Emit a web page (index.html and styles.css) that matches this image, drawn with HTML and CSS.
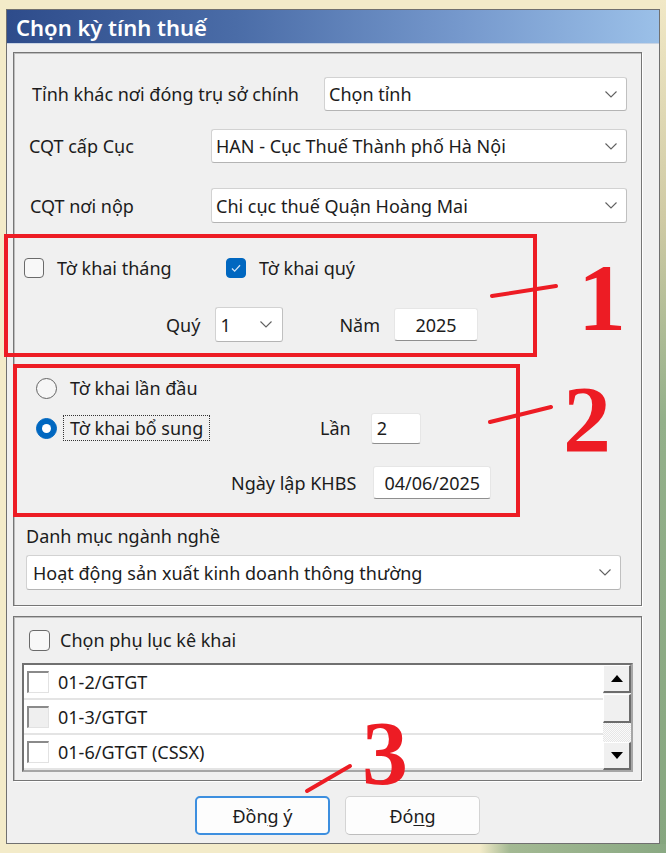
FILE: index.html
```html
<!DOCTYPE html>
<html lang="vi">
<head>
<meta charset="utf-8">
<title>Chọn kỳ tính thuế</title>
<link rel="stylesheet" href="styles.css">
</head>
<body>
<div class="window">
  <div class="titlebar">Chọn kỳ tính thuế</div>
  <div class="client">
    <div class="group group-main">
      <div class="row row1">
        <span class="lbl lbl-tinh">Tỉnh khác nơi đóng trụ sở chính</span>
        <div class="select grow"><span class="val">Chọn tỉnh</span><svg class="chev" viewBox="0 0 12 7"><polyline points="0.5,0.5 6,6 11.5,0.5"/></svg></div>
      </div>
      <div class="row row2">
        <span class="lbl lbl-cqt">CQT cấp Cục</span>
        <div class="select grow"><span class="val">HAN - Cục Thuế Thành phố Hà Nội</span><svg class="chev" viewBox="0 0 12 7"><polyline points="0.5,0.5 6,6 11.5,0.5"/></svg></div>
      </div>
      <div class="row row3">
        <span class="lbl lbl-cqt2">CQT nơi nộp</span>
        <div class="select grow"><span class="val">Chi cục thuế Quận Hoàng Mai</span><svg class="chev" viewBox="0 0 12 7"><polyline points="0.5,0.5 6,6 11.5,0.5"/></svg></div>
      </div>
      <div class="row row-check">
        <label class="opt opt-thang"><span class="cb"></span><span>Tờ khai tháng</span></label>
        <label class="opt"><span class="cb checked"><svg viewBox="0 0 20 20"><polyline points="5.5,10.5 8.5,13.5 14.5,7"/></svg></span><span>Tờ khai quý</span></label>
      </div>
      <div class="row row-quy">
        <span class="lbl-quy">Quý</span>
        <div class="select sel-quy"><span class="val">1</span><svg class="chev" viewBox="0 0 12 7"><polyline points="0.5,0.5 6,6 11.5,0.5"/></svg></div>
        <span class="lbl-nam">Năm</span>
        <div class="tb tb-nam">2025</div>
      </div>
      <div class="row row-radio1">
        <label class="opt"><span class="rb"></span><span>Tờ khai lần đầu</span></label>
      </div>
      <div class="row row-radio2">
        <label class="opt opt-bs"><span class="rb checked"></span><span class="focus">Tờ khai bổ sung</span></label>
        <span class="lbl-lan">Lần</span>
        <div class="tb tb-lan">2</div>
      </div>
      <div class="row row-ngay">
        <span class="lbl-ngay">Ngày lập KHBS</span>
        <div class="tb tb-ngay">04/06/2025</div>
      </div>
      <div class="lbl-danh">Danh mục ngành nghề</div>
      <div class="select sel-danh"><span class="val">Hoạt động sản xuất kinh doanh thông thường</span><svg class="chev" viewBox="0 0 12 7"><polyline points="0.5,0.5 6,6 11.5,0.5"/></svg></div>
    </div>

    <div class="group group-pl">
      <div class="row row-pl">
        <label class="opt"><span class="cb"></span><span>Chọn phụ lục kê khai</span></label>
      </div>
      <div class="list">
        <div class="items">
          <div class="item"><span class="ccb"></span><span>01-2/GTGT</span></div>
          <div class="item"><span class="ccb grey"></span><span>01-3/GTGT</span></div>
          <div class="item"><span class="ccb"></span><span>01-6/GTGT (CSSX)</span></div>
        </div>
        <div class="scrollbar">
          <div class="sbtn"><svg viewBox="0 0 12 7"><polygon points="0,7 6,0 12,7"/></svg></div>
          <div class="thumb"></div>
          <div class="track"></div>
          <div class="sbtn"><svg viewBox="0 0 12 7"><polygon points="0,0 12,0 6,7"/></svg></div>
        </div>
      </div>
    </div>

    <div class="buttons">
      <button class="btn default">Đồn<u>g</u> ý</button>
      <button class="btn">Đó<u>n</u>g</button>
    </div>
  </div>
</div>

<div class="mark mark-box1"></div>
<div class="mark mark-box2"></div>
<svg class="mark-lines" viewBox="0 0 666 853" width="666" height="853">
  <line x1="492" y1="296" x2="556" y2="286"/>
  <line x1="490" y1="422" x2="551" y2="407"/>
  <line x1="307" y1="791" x2="350" y2="766"/>
</svg>
<span class="num num1">1</span>
<span class="num num2">2</span>
<span class="num num3">3</span>
</body>
</html>
```
FILE: styles.css
```css
* { box-sizing: border-box; }
html, body { margin: 0; padding: 0; }
body {
  width: 666px;
  height: 853px;
  overflow: hidden;
  position: relative;
  font-family: "Noto Sans", "Open Sans", "DejaVu Sans", sans-serif;
  font-size: 18px;
  color: #1c1c1c;
  background:
    linear-gradient(to right, #f3ebc9 0, #f3ebc9 660px, transparent 660px) 0 0 / 666px 844px no-repeat,
    linear-gradient(to right, #f3ebc9 0, #f3ebc9 480px, #a3b993 510px, #8aa983 100%) 0 844px / 666px 9px no-repeat,
    linear-gradient(to bottom, #f1e8c6 0, #cfcaa4 220px, #93b08a 420px, #86a67f 100%);
}
.window {
  margin: 9px 0 0 6px;
  width: 654px;
  height: 835px;
  border: 1px solid #707070;
  background: #f0f0f0;
  display: flex;
  flex-direction: column;
}
.titlebar {
  height: 34px;
  padding-left: 9px;
  display: flex;
  align-items: center;
  color: #fff;
  font-family: "Noto Sans", sans-serif;
  font-weight: 600;
  font-size: 22px;
  background: linear-gradient(to right, #2e4c8b 0%, #4a6ca7 35%, #7699cd 70%, #9bc0e8 100%);
  border-bottom: 1px solid #c9d4e4;
}
.client {
  flex: 1;
  padding: 8px 17px 0 6px;
  display: flex;
  flex-direction: column;
}
.group {
  border: 1px solid #767676;
  box-shadow: inset 1px 1px 0 #bdbdbd, 1px 1px 0 #fff;
}
.group-main { padding: 0 0 15px 0; }
.row {
  display: flex;
  align-items: center;
}
.grow { flex: 1; }

.row1 { margin-top: 24px; height: 34px; padding: 0 14px 0 18px; }
.row2 { margin-top: 18px; height: 34px; padding: 0 14px 0 15px; }
.row3 { margin-top: 25px; height: 35px; padding: 0 14px 0 16px; }
.lbl-tinh { width: 292px; white-space: nowrap; }
.lbl-cqt { width: 182px; }
.lbl-cqt2 { width: 181px; }
.row1 .select, .row2 .select, .row3 .select { height: 100%; }

.select {
  display: flex;
  align-items: center;
  background: #fff;
  border: 1px solid #d2d2d2;
  border-bottom-color: #b4b4b4;
  border-right-color: #c0c0c0;
  border-radius: 3px;
  padding: 0 9px 0 4px;
}
.select .val { flex: 1; white-space: nowrap; }
.chev { width: 12px; height: 7px; flex: none; }
.chev polyline { fill: none; stroke: #606060; stroke-width: 1.1; }

.row-check { margin-top: 33px; height: 24px; padding-left: 10px; }
.opt { display: flex; align-items: center; gap: 13px; white-space: nowrap; }
.opt-thang { width: 202px; }
.cb {
  width: 20px; height: 20px;
  border: 1px solid #6a6a6a;
  border-radius: 4px;
  background: #f8f8f8;
  flex: none;
  display: block;
}
.cb.checked { background: #0067c0; border-color: #0067c0; }
.cb.checked svg { width: 18px; height: 18px; display: block; }
.cb.checked polyline { fill: none; stroke: #cfe4f7; stroke-width: 1.4; }

.row-quy { margin-top: 27px; height: 35px; padding-left: 152px; }
.lbl-quy { margin-right: 15px; }
.sel-quy { width: 68px; height: 35px; padding-left: 4px; padding-right: 10px; }
.lbl-nam { margin-left: 56px; margin-right: 14px; }
.tb {
  display: flex;
  align-items: center;
  background: #fff;
  border: 1px solid #e6e6e6;
  border-bottom: 1px solid #8f8f8f;
  border-radius: 3px;
  padding: 0 5px;
}
.tb-nam { width: 84px; height: 33px; justify-content: center; }

.row-radio1 { margin-top: 34px; height: 24px; padding-left: 22px; }
.rb {
  width: 21px; height: 21px;
  border-radius: 50%;
  border: 1px solid #646464;
  background: #f6f6f6;
  flex: none;
  display: flex;
  align-items: center;
  justify-content: center;
}
.rb.checked { background: #0067c0; border-color: #0067c0; }
.rb.checked::after {
  content: "";
  width: 9px; height: 9px;
  border-radius: 50%;
  background: #fff;
}
.row-radio2 { margin-top: 12px; height: 32px; padding-left: 22px; }
.opt-bs { gap: 6px; width: 284px; }
.focus { border: 1px dotted #333; padding: 0 6px 1px 6px; height: 26px; display: flex; align-items: center; }
.lbl-lan { margin-right: 20px; }
.tb-lan { width: 50px; height: 31px; }

.row-ngay { margin-top: 22px; height: 33px; padding-left: 217px; }
.lbl-ngay { margin-right: 17px; white-space: nowrap; }
.tb-ngay { width: 118px; height: 33px; justify-content: center; padding: 0 2px; }

.lbl-danh { margin: 26px 0 0 12px; height: 22px; line-height: 22px; }
.sel-danh { margin: 8px 20px 0 12px; height: 35px; padding-left: 6px; }

.group-pl { margin-top: 10px; padding: 0 8px 8px 8px; }
.row-pl { margin-top: 12px; height: 22px; padding-left: 7px; }
.row-pl .opt { gap: 10px; }
.row-pl .cb { width: 21px; height: 21px; }

.list {
  margin-top: 12px;
  height: 109px;
  display: flex;
  background: #fff;
  border: 2px solid;
  border-color: #707070 #a6a6a6 #a6a6a6 #707070;
}
.items { flex: 1; }
.item {
  height: 35px;
  display: flex;
  align-items: center;
  gap: 9px;
  padding-left: 3px;
  border-bottom: 2px solid #e4e4e4;
}
.ccb {
  width: 22px; height: 22px;
  background: #fff;
  border-top: 2px solid #8a8a8a;
  border-left: 2px solid #8a8a8a;
  border-right: 1px solid #e2e2e2;
  border-bottom: 1px solid #e2e2e2;
  flex: none;
}
.ccb.grey { background: #efefef; }
.scrollbar {
  width: 28px;
  display: flex;
  flex-direction: column;
  background: #f0f0f0;
}
.sbtn, .thumb {
  background: #f0f0f0;
  border-top: 1px solid #fff;
  border-left: 1px solid #fff;
  border-right: 2px solid #6c6c6c;
  border-bottom: 2px solid #6c6c6c;
}
.sbtn {
  height: 28px;
  display: flex;
  align-items: center;
  justify-content: center;
}
.sbtn svg { width: 12px; height: 7px; }
.sbtn polygon { fill: #000; }
.thumb { height: 29px; margin-top: 1px; }
.track {
  flex: 1;
  background: repeating-conic-gradient(#e6e6e6 0 25%, #fafafa 0 50%) 0 0 / 2px 2px;
}

.buttons {
  margin-top: 15px;
  display: flex;
  gap: 15px;
  padding-left: 182px;
}
.btn {
  width: 135px;
  height: 39px;
  font-family: inherit;
  font-size: 18px;
  color: #1c1c1c;
  background: #fdfdfd;
  border: 1px solid #d4d4d4;
  border-bottom-color: #bdbdbd;
  border-radius: 5px;
  padding: 0;
}
.btn.default { border: 2px solid #3d8fdf; }
.btn u { text-underline-offset: 2px; }

/* red annotation overlay */
.mark {
  position: absolute;
  border: 4px solid #ed1c24;
}
.mark-box1 { left: 4px; top: 234px; width: 533px; height: 123px; }
.mark-box2 { left: 13px; top: 364px; width: 507px; height: 153px; }
.mark-lines {
  position: absolute;
  left: 0; top: 0;
  pointer-events: none;
}
.mark-lines line { stroke: #ed1c24; stroke-width: 4; stroke-linecap: round; }
.num {
  position: absolute;
  font-family: "Liberation Serif", "Times New Roman", serif;
  font-weight: bold;
  font-size: 96px;
  line-height: 70px;
  color: #ed1c24;
}
.num1 { left: 578px; top: 263px; }
.num2 { left: 563px; top: 385px; }
.num3 { left: 362px; top: 718px; font-size: 92px; }
```
